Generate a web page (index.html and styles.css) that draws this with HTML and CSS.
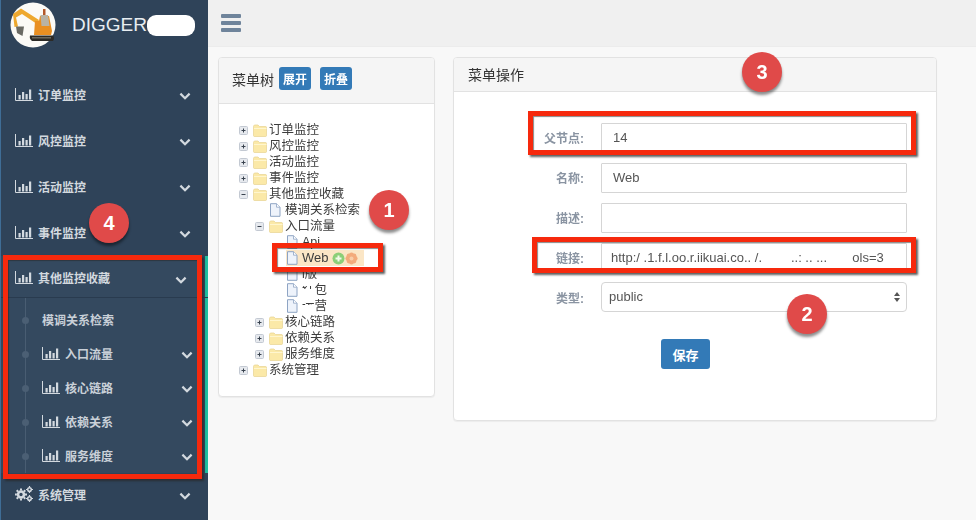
FILE: index.html
```html
<!DOCTYPE html>
<html lang="zh">
<head>
<meta charset="utf-8">
<title>菜单管理</title>
<link rel="stylesheet" href="styles.css">
</head>
<body>
<svg class="defs" width="0" height="0" aria-hidden="true">
  <symbol id="bars" viewBox="0 0 18 13">
    <path d="M.5 0v12.500H18" fill="none" stroke="currentColor"/>
    <path d="M3.500 7h2.200v4.500H3.500zM7 4h2.200v7.500H7zM10.500 6h2.200v5.500h-2.200zM14 1.500h2.200v10H14z" fill="currentColor"/>
  </symbol>
  <symbol id="chev" viewBox="0 0 12 8">
    <path d="M1.400 1.600 6 6.200l4.600-4.600" fill="none" stroke="currentColor" stroke-width="2.200"/>
  </symbol>
  <symbol id="gears" viewBox="0 0 18 16">
    <g fill="none" stroke="currentColor">
      <circle cx="6" cy="8.500" r="3" stroke-width="2.600"/>
      <path d="M6 2.400v2M6 12.600v2M-.1 8.500h2M10 8.500h2M1.700 4.200l1.400 1.400M8.900 11.400l1.400 1.400M1.700 12.800l1.400-1.400M8.900 5.600l1.400-1.400" stroke-width="2"/>
      <circle cx="14.500" cy="3.500" r="1.800" stroke-width="1.500"/>
      <path d="M14.500 0v1M14.500 6v1M11 3.500h1M17 3.500h1" stroke-width="1.200"/>
      <circle cx="14.500" cy="12.500" r="1.800" stroke-width="1.500"/>
      <path d="M14.500 9v1M14.500 15v1M12 12.500h-1M18 12.500h-1" stroke-width="1.200"/>
    </g>
  </symbol>
  <symbol id="plus" viewBox="0 0 9 9">
    <rect x=".5" y=".5" width="8" height="8" rx="1" fill="#e6e9ee" stroke="#c3c9d2"/>
    <path d="M2.500 4.500h4M4.500 2.500v4" stroke="#39424e"/>
  </symbol>
  <symbol id="minus" viewBox="0 0 9 9">
    <rect x=".5" y=".5" width="8" height="8" rx="1" fill="#e6e9ee" stroke="#c3c9d2"/>
    <path d="M2.500 4.500h4" stroke="#39424e"/>
  </symbol>
  <symbol id="folder" viewBox="0 0 14 13">
    <path d="M.5 2.500q0-1.500 1.500-1.500h3l1.500 1.500h6q1 0 1 1v8q0 1-1 1H1.500q-1 0-1-1z" fill="#fbe9a8" stroke="#e6d391" stroke-width=".7"/>
    <path d="M1 4.500h12.500" stroke="#fff6cf"/>
  </symbol>
  <symbol id="doc" viewBox="0 0 12 14">
    <path d="M1.500.7h6l3.500 3.500v9.100h-9.500z" fill="#eef3fb" stroke="#8ea4c4"/>
    <path d="M7.500.7v3.500H11" fill="#fff" stroke="#8ea4c4" stroke-width=".8"/>
  </symbol>
  <symbol id="act-add" viewBox="0 0 13 13">
    <circle cx="6.500" cy="6.500" r="6" fill="#8ccf78"/>
    <path d="M3.500 6.500h6M6.500 3.500v6" stroke="#f1fbe9" stroke-width="2"/>
  </symbol>
  <symbol id="act-edit" viewBox="0 0 13 13">
    <g fill="#f3ab7c">
      <circle cx="6.500" cy="2.800" r="2.400"/><circle cx="6.500" cy="10.200" r="2.400"/>
      <circle cx="2.800" cy="6.500" r="2.400"/><circle cx="10.200" cy="6.500" r="2.400"/>
      <circle cx="3.900" cy="3.900" r="2.300"/><circle cx="9.100" cy="3.900" r="2.300"/>
      <circle cx="3.900" cy="9.100" r="2.300"/><circle cx="9.100" cy="9.100" r="2.300"/>
    </g>
    <circle cx="6.500" cy="6.500" r="2" fill="#f8cda8"/>
  </symbol>
</svg>

<div class="app">
  <aside class="sidebar">
    <header class="brand">
      <svg class="logo" viewBox="0 0 46 46">
        <circle cx="23" cy="23" r="22.500" fill="#fbfaf6"/>
        <path d="M3 12 11 6.500 29 18l-2 4-15-10-6 3.500 2 9-3.500.5z" fill="#eea82e"/>
        <path d="M6 24.500h8L12.500 34 7 31z" fill="#6a6a64"/>
        <path d="M25 19h4l1-5h9l3 15-1 4H24z" fill="#e98f22"/>
        <path d="M30.500 13h7.500l1.500 11h-8z" fill="#b9b3a5"/>
        <path d="M33 7h2.500v6H33z" fill="#b4582a"/>
        <path d="M20 33.500h23q2 2.500 0 5.500H22q-3-2.500-2-5.500z" fill="#2c2a26"/>
        <path d="M22 35h19v1.500H22z" fill="#6c685c"/>
      </svg>
      <span class="brand-name">DIGGER</span>
      <span class="brand-mask"></span>
    </header>
    <nav class="menu">
      <a class="item"><svg class="ico"><use href="#bars"/></svg><span class="label">订单监控</span><svg class="chev"><use href="#chev"/></svg></a>
      <a class="item"><svg class="ico"><use href="#bars"/></svg><span class="label">风控监控</span><svg class="chev"><use href="#chev"/></svg></a>
      <a class="item"><svg class="ico"><use href="#bars"/></svg><span class="label">活动监控</span><svg class="chev"><use href="#chev"/></svg></a>
      <a class="item"><svg class="ico"><use href="#bars"/></svg><span class="label">事件监控</span><svg class="chev"><use href="#chev"/></svg></a>
      <div class="open-group">
        <a class="item open-head"><svg class="ico"><use href="#bars"/></svg><span class="label">其他监控收藏</span><svg class="chev"><use href="#chev"/></svg></a>
        <ul class="sub">
          <li class="sub-item"><span class="label">模调关系检索</span></li>
          <li class="sub-item"><svg class="ico sub-ico"><use href="#bars"/></svg><span class="label">入口流量</span><svg class="chev"><use href="#chev"/></svg></li>
          <li class="sub-item"><svg class="ico sub-ico"><use href="#bars"/></svg><span class="label">核心链路</span><svg class="chev"><use href="#chev"/></svg></li>
          <li class="sub-item"><svg class="ico sub-ico"><use href="#bars"/></svg><span class="label">依赖关系</span><svg class="chev"><use href="#chev"/></svg></li>
          <li class="sub-item"><svg class="ico sub-ico"><use href="#bars"/></svg><span class="label">服务维度</span><svg class="chev"><use href="#chev"/></svg></li>
        </ul>
      </div>
      <a class="item item-system"><svg class="ico ico-gears"><use href="#gears"/></svg><span class="label">系统管理</span><svg class="chev"><use href="#chev"/></svg></a>
    </nav>
  </aside>

  <div class="content">
    <div class="topbar">
      <div class="burger"><i></i><i></i><i></i></div>
    </div>
    <main class="panels">
      <section class="panel tree-panel">
        <div class="panel-head tree-head">
          <h2 class="panel-title">菜单树</h2>
          <button class="btn btn-xs">展开</button>
          <button class="btn btn-xs">折叠</button>
        </div>
        <div class="tree">
          <div class="row"><svg class="tg"><use href="#plus"/></svg><svg class="fo"><use href="#folder"/></svg><span>订单监控</span></div>
          <div class="row"><svg class="tg"><use href="#plus"/></svg><svg class="fo"><use href="#folder"/></svg><span>风控监控</span></div>
          <div class="row"><svg class="tg"><use href="#plus"/></svg><svg class="fo"><use href="#folder"/></svg><span>活动监控</span></div>
          <div class="row"><svg class="tg"><use href="#plus"/></svg><svg class="fo"><use href="#folder"/></svg><span>事件监控</span></div>
          <div class="row"><svg class="tg"><use href="#minus"/></svg><svg class="fo"><use href="#folder"/></svg><span>其他监控收藏</span></div>
          <div class="row lv2 leaf"><svg class="dc"><use href="#doc"/></svg><span>模调关系检索</span></div>
          <div class="row lv2"><svg class="tg"><use href="#minus"/></svg><svg class="fo"><use href="#folder"/></svg><span>入口流量</span></div>
          <div class="row lv3 leaf"><svg class="dc"><use href="#doc"/></svg><span>Api</span></div>
          <div class="row lv3 leaf"><div class="selected"><svg class="dc"><use href="#doc"/></svg><span>Web</span><svg class="act act-first"><use href="#act-add"/></svg><svg class="act"><use href="#act-edit"/></svg></div></div>
          <div class="row lv3 leaf"><svg class="dc"><use href="#doc"/></svg><span>i版</span></div>
          <div class="row lv3 leaf"><svg class="dc"><use href="#doc"/></svg><span><span class="smudge">红</span>包</span></div>
          <div class="row lv3 leaf"><svg class="dc"><use href="#doc"/></svg><span><span class="smudge">运</span>营</span></div>
          <div class="row lv2"><svg class="tg"><use href="#plus"/></svg><svg class="fo"><use href="#folder"/></svg><span>核心链路</span></div>
          <div class="row lv2"><svg class="tg"><use href="#plus"/></svg><svg class="fo"><use href="#folder"/></svg><span>依赖关系</span></div>
          <div class="row lv2"><svg class="tg"><use href="#plus"/></svg><svg class="fo"><use href="#folder"/></svg><span>服务维度</span></div>
          <div class="row"><svg class="tg"><use href="#plus"/></svg><svg class="fo"><use href="#folder"/></svg><span>系统管理</span></div>
        </div>
      </section>

      <section class="panel form-panel">
        <div class="panel-head form-head">
          <h2 class="panel-title">菜单操作</h2>
        </div>
        <form class="form">
          <label class="field"><span class="field-label">父节点:</span><input class="control" value="14"></label>
          <label class="field"><span class="field-label">名称:</span><input class="control" value="Web"></label>
          <label class="field"><span class="field-label">描述:</span><input class="control" value=""></label>
          <label class="field"><span class="field-label">链接:</span><input class="control control-link" value="http:/ .1.f.l.oo.r.iikuai.co.. /.        ..: .. ...       ols=3"></label>
          <label class="field"><span class="field-label">类型:</span><select class="control control-select"><option>public</option></select></label>
          <div class="actions"><button class="btn btn-save" type="button">保存</button></div>
        </form>
      </section>
    </main>
  </div>

  <div class="mark mark-tree"></div>
  <div class="mark mark-parent"></div>
  <div class="mark mark-link"></div>
  <div class="mark mark-side"></div>
  <div class="badge badge-1">1</div>
  <div class="badge badge-2">2</div>
  <div class="badge badge-3">3</div>
  <div class="badge badge-4">4</div>
</div>
</body>
</html>
```

FILE: styles.css
```css
* { box-sizing: border-box; }
html, body { margin: 0; height: 100%; overflow: hidden; }
body {
  font-family: "Liberation Sans", "Noto Sans CJK SC", sans-serif;
  background: #f8f8f8;
  color: #333;
  font-size: 12px;
}
.defs { position: absolute; }
.app { position: relative; display: flex; width: 976px; height: 520px; overflow: hidden; filter: blur(.4px); }

/* sidebar */
.sidebar { width: 208px; flex: none; background: #2f4359; color: #d3d9df; border-left: 1px solid #3f6d96; }
.brand { display: flex; align-items: center; height: 72px; padding: 0 0 22px 9px; }
.logo { width: 46px; height: 46px; flex: none; }
.brand-name { margin: -1px 0 0 16px; font-size: 19px; color: #e8edf1; }
.brand-mask { width: 48px; height: 21px; background: #fff; border-radius: 9px; }
.menu { display: flex; flex-direction: column; }
.item { display: flex; align-items: center; height: 46px; padding: 0 17px 2px 14px; font-weight: 700; }
.item-system { margin-top: -1px; }
.ico { width: 18px; height: 13px; margin: 0 5px 0 0; flex: none; color: #d3d9df; }
.ico-gears { height: 16px; }
.label { flex: 1; }
.chev { width: 12px; height: 8px; margin-top: 4px; flex: none; color: #d3d9df; }
.open-group { background: #34495f; box-shadow: inset -3px 0 0 #1fbfa0; }
.open-head { height: 42px; padding: 4px 21px 2px 14px; border-bottom: 1px solid #293b4f; }
.sub { position: relative; list-style: none; margin: 0; padding: 5px 0 0; }
.sub::before { content: ""; position: absolute; left: 24px; top: 0; bottom: 0; width: 1px; background: #495d72; }
.sub-item { position: relative; display: flex; align-items: center; height: 34px; padding: 0 15px 2px 41px; font-weight: 700; color: #c9d0d8; }
.sub-item::before { content: ""; position: absolute; left: 21px; top: 14px; width: 7px; height: 7px; border-radius: 50%; background: #4b5f74; }
.sub-ico { margin-right: 5px; }

/* top bar */
.content { flex: 1; min-width: 0; display: flex; flex-direction: column; }
.topbar { height: 47px; flex: none; padding: 14px 0 0 13px; background: #f0f0f0; border-bottom: 1px solid #ececec; }
.burger { display: flex; flex-direction: column; gap: 3px; width: 20px; }
.burger i { height: 4px; background: #6f849b; border-radius: 1px; }

/* panels */
.panels { display: flex; align-items: flex-start; gap: 18px; padding: 10px 0 0 10px; }
.panel { background: #fff; border: 1px solid #e2e2e2; border-radius: 4px; box-shadow: 0 1px 1px rgba(0,0,0,.05); }
.tree-panel { width: 217px; height: 340px; }
.form-panel { width: 484px; height: 364px; }
.panel-head { display: flex; align-items: center; height: 34px; padding: 0 14px; background: #f5f5f5; border-bottom: 1px solid #e2e2e2; border-radius: 3px 3px 0 0; }
.tree-head { height: 46px; padding: 0 13px 4px; }
.form-head { padding-bottom: 2px; }
.panel-title { margin: 0; font-size: 14px; font-weight: 400; color: #333; }
.btn { font: inherit; border: 0; background: #337ab7; color: #fff; border-radius: 3px; }
.btn-xs { width: 32px; height: 23px; padding: 0; margin-left: 5px; font-weight: 700; font-size: 12px; }
.btn-xs + .btn-xs { margin-left: 9px; }

/* tree */
.tree { padding: 18px 0 0 20px; color: #3c3c3c; font-size: 12.500px; }
.row { display: flex; align-items: center; height: 16px; line-height: 16px; white-space: nowrap; }
.lv2 { padding-left: 16px; }
.lv3 { padding-left: 32px; }
.leaf.lv2 { padding-left: 30px; }
.leaf.lv3 { padding-left: 47px; }
.tg { width: 9px; height: 9px; flex: none; }
.fo { width: 14px; height: 13px; flex: none; margin: 0 2px 0 5px; }
.dc { width: 12px; height: 14px; flex: none; margin-right: 4px; }
.selected { display: flex; align-items: center; height: 16px; width: 78px; background: #fbe6c6; font-size: 13px; }
.act { width: 13px; height: 13px; flex: none; }
.act-first { margin-left: 3px; }
.smudge { color: transparent; background: linear-gradient(#fff 20%, #3c3c3c 20%, #3c3c3c 42%, #fff 42%); -webkit-background-clip: text; background-clip: text; }

/* form */
.form { padding: 31px 29px 0 0; }
.field { display: flex; align-items: center; height: 30px; margin-bottom: 10px; }
.field-label { width: 130px; padding-bottom: 2px; text-align: right; font-weight: 700; color: #8a94a2; font-size: 12px; }
.control { width: 306px; height: 30px; margin-left: 17px; padding: 0 11px 2px; border: 1px solid #d5d5d5; background: #fff; color: #555; font: 13px "Liberation Sans", "Noto Sans CJK SC", sans-serif; border-radius: 1px; outline: 0; }
.control-link { padding: 0 9px 2px; }
.control-select { appearance: none; margin-top: -2px; padding: 0 7px 2px; border-radius: 4px; background: #fff url("data:image/svg+xml,%3Csvg xmlns='http://www.w3.org/2000/svg' width='8' height='12'%3E%3Cpath d='M4 1 7 5H1zM4 11 1 7h6z' fill='%23555'/%3E%3C/svg%3E") no-repeat right 5px center; }
.actions { padding: 16px 0 0 207px; }
.btn-save { width: 49px; height: 30px; font-size: 13px; font-weight: 700; }

/* overlays */
.mark { position: absolute; border: 5px solid #f6290d; box-shadow: 2px 2px 2px rgba(40,40,40,.75), inset 1px 1px 1px rgba(40,40,40,.55); }
.mark-tree { left: 272px; top: 243px; width: 111px; height: 29px; }
.mark-parent { left: 528px; top: 111px; width: 388px; height: 44px; }
.mark-link { left: 532px; top: 237px; width: 384px; height: 36px; }
.mark-side { left: 3px; top: 255px; width: 199px; height: 224px; }
.badge { position: absolute; width: 40px; height: 40px; line-height: 40px; text-align: center; border-radius: 50%; background: #e04a49; color: #fff; font-size: 20px; font-weight: 700; box-shadow: 0 3px 3px rgba(0,0,0,.45); }
.badge-1 { left: 369px; top: 190px; }
.badge-2 { left: 787px; top: 294px; }
.badge-3 { left: 742px; top: 52px; }
.badge-4 { left: 89px; top: 203px; }
```
